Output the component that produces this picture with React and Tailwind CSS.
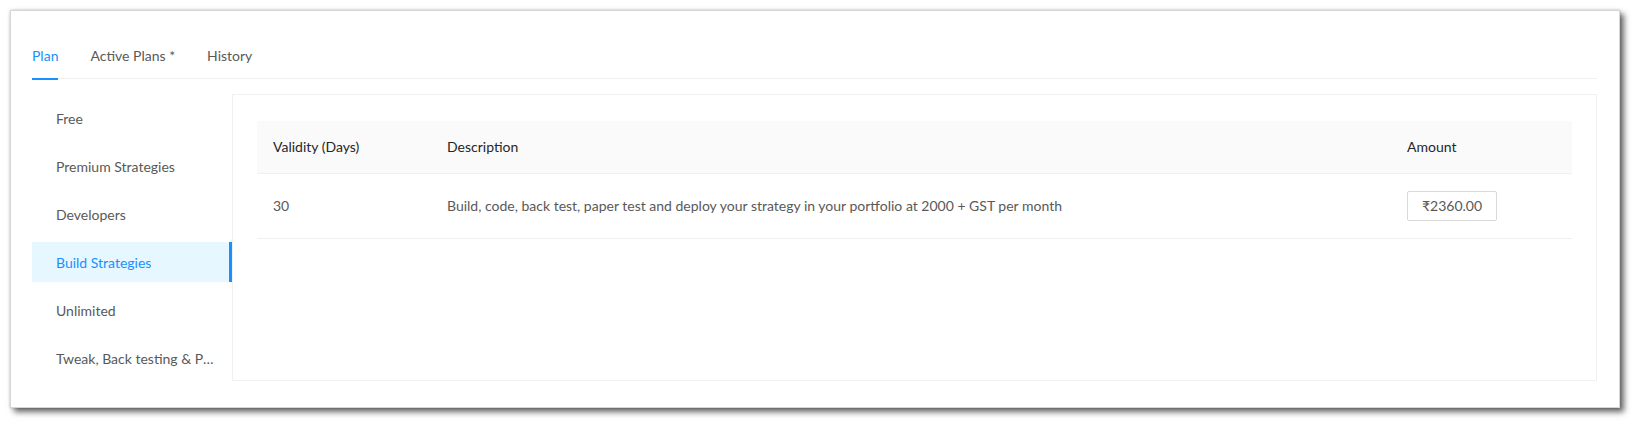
import { useState } from 'react';

const tabs = ['Plan', 'Active Plans *', 'History'];
const plans = [
  'Free',
  'Premium Strategies',
  'Developers',
  'Build Strategies',
  'Unlimited',
  'Tweak, Back testing & Paper trading',
];

export default function App() {
  const [tab, setTab] = useState('Plan');
  const [active, setActive] = useState('Build Strategies');

  return (
    <div className="w-full h-[425px] bg-white pt-[10px] pl-[10px] font-['Lato',sans-serif] text-[14px]">
      <div className="w-[1610px] h-[398px] bg-white border border-[#d6d6d6] shadow-[4px_4px_6px_rgba(0,0,0,0.6),0_0_3px_rgba(0,0,0,0.2)] pt-[21px] pl-[21px] pr-[22px]">
        {/* tabs */}
        <div className="flex gap-8 border-b border-[#f0f0f0] h-[47px]">
          {tabs.map((t) => (
            <button
              key={t}
              onClick={() => setTab(t)}
              className={
                'relative h-[47px] leading-[22px] py-3 ' +
                (tab === t ? 'text-[#1890ff]' : 'text-[#595959]')
              }
            >
              {t}
              {tab === t && <span className="absolute left-0 right-0 bottom-[-1px] h-[2px] bg-[#1890ff]" />}
            </button>
          ))}
        </div>

        <div className="flex mt-[15px]">
          {/* side menu */}
          <ul className="w-[200px] shrink-0 pt-1">
            {plans.map((p) => (
              <li
                key={p}
                title={p}
                onClick={() => setActive(p)}
                className={
                  'h-10 mb-2 pl-6 pr-4 flex items-center cursor-pointer ' +
                  (active === p
                    ? 'bg-[#e6f7ff] text-[#1890ff] border-r-[3px] border-[#1890ff]'
                    : 'text-[#595959]')
                }
              >
                <span className="truncate">{p}</span>
              </li>
            ))}
          </ul>

          {/* panel */}
          <div className="flex-1 h-[287px] border border-[#f0f0f0] pt-[26px] px-6">
            <table className="w-full border-collapse text-left">
              <thead>
                <tr className="bg-[#fafafa] border-b border-[#f0f0f0] h-[52px]">
                  <th className="font-normal text-[#262626] px-4 w-[174px]">Validity (Days)</th>
                  <th className="font-normal text-[#262626] px-4">Description</th>
                  <th className="font-normal text-[#262626] px-4 w-[181px]">Amount</th>
                </tr>
              </thead>
              <tbody>
                <tr className="border-b border-[#f0f0f0] h-[65px] text-[#595959]">
                  <td className="px-4">30</td>
                  <td className="px-4">
                    Build, code, back test, paper test and deploy your strategy in your portfolio at 2000 + GST per month
                  </td>
                  <td className="px-4">
                    <span className="inline-flex items-center justify-center w-[90px] h-[30px] border border-[#d9d9d9] rounded-[2px]">
                      ₹2360.00
                    </span>
                  </td>
                </tr>
              </tbody>
            </table>
          </div>
        </div>
      </div>
    </div>
  );
}
